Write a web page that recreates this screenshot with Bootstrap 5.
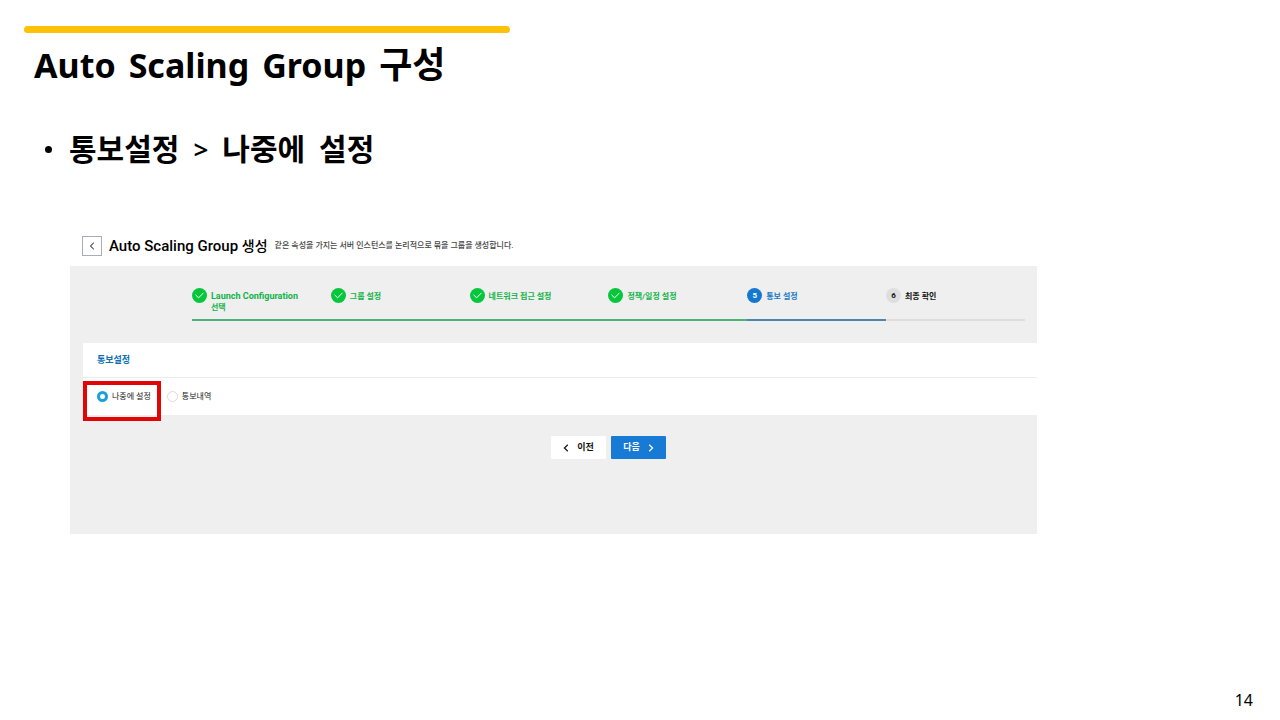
<!DOCTYPE html>
<html lang="ko">
<head>
<meta charset="utf-8">
<meta name="viewport" content="width=device-width, initial-scale=1">
<title>Auto Scaling Group 구성</title>
<link href="https://cdn.jsdelivr.net/npm/bootstrap@5.3.0/dist/css/bootstrap.min.css" rel="stylesheet">
<style>
body{font-family:"Noto Sans","Noto Sans CJK KR",sans-serif;color:#000}
.slide{padding-top:26px}
.accent{width:38%;height:7px;margin-left:24px;background:#fdc107}
.slide-title{font-size:34px;line-height:48px;margin:8px 0 0 34px;column-gap:13px}
.slide-title .hangul{font-size:36px}
.slide-list{list-style:none;margin:38px 0 0 45px;font-size:30px;line-height:44px}
.slide-list li{column-gap:14px}
.slide-list .arrow{font-size:26px;font-weight:600}
.dot{width:7px;height:7px;margin-right:3px;background:#000}
.console{font-family:Roboto,"Noto Sans CJK KR",sans-serif;margin:65px 19% 0 70px;font-size:9px;line-height:11px}
.console-head{height:30px;padding-left:12px;column-gap:7px}
.back{width:20px;height:20px;border:1px solid #a9abb8;background:#fff}
.console-title{font-size:15px;line-height:20px;font-weight:500}
.console-title .hangul{font-size:14px}
.console-desc{font-size:8px;line-height:20px;font-weight:500;color:#444}
.panel{background:#efefef;padding-bottom:75px}
.steps,.actions{padding:0 12px 0 122px}
.steps{list-style:none;padding-top:22px}
.step{flex:1 1 0;height:33px;border-bottom:2px solid #dedede;color:#111;font-size:8px}
.step.done{color:#12b348;border-color:#4fb078}
.step.now{color:#1a7ac4;border-color:#4a86ae}
.step-name{font-size:9px}
.num{width:15px;height:15px;border-radius:50%;background:#dedede;flex:none}
.done .num{background:#06c73c;color:#fff}
.now .num{background:#1478d0;color:#fff}
.step-label{padding-top:3px}
.section-box{background:#fff;margin:22px 0 0 13px}
.section-title{font-size:9px;line-height:34px;padding-left:14px;color:#0e6fb5;border-bottom:1px solid #ebebeb}
.section-body{height:37px;padding-left:14px;font-size:8px;color:#222}
.section-body .form-check-input{width:11px;height:11px;margin:0 4px 0 0;border:1px solid #ddd;background:#fff}
.section-body .form-check-input:checked{border:3px solid #1d9fdb;background:#fff}
.section-body .choice+.choice{margin-left:16px}
.marker{left:0;top:3px;width:78px;height:40px;border:4px solid #e10505}
.actions{margin-top:21px;column-gap:5px}
.nav-btn{width:55px;height:23px;font-size:9px;line-height:11px;border-radius:1px;padding:0}
.nav-prev,.nav-prev:hover{background:#fff;color:#111}
.nav-next,.nav-next:hover{background:#177bd6;color:#fff}
.page-no{font-size:16px;line-height:20px;padding:0 27px 10px 0}
svg{fill:none;stroke:currentColor;display:block}
</style>
</head>
<body class="bg-white">
<div class="slide min-vh-100 d-flex flex-column">
<div class="accent rounded-1"></div>
<h1 class="slide-title fw-bold d-flex align-items-baseline mb-0"><span>Auto</span> <span>Scaling</span> <span>Group</span> <span class="hangul">구성</span></h1>
<ul class="slide-list p-0 mb-0 fw-bold"><li class="d-flex align-items-center"><span class="dot rounded-circle"></span><span>통보설정</span> <span class="arrow">&gt;</span> <span>나중에</span> <span>설정</span></li></ul>

<main class="console">
  <header class="console-head d-flex align-items-start">
    <button class="back p-0 d-flex align-items-center justify-content-center" type="button" aria-label="뒤로"><svg width="6" height="8" viewBox="0 0 6 8"><path d="M4.8.8 1.4 4l3.4 3.2"/></svg></button>
    <h2 class="console-title mb-0">Auto Scaling Group <span class="hangul">생성</span></h2>
    <p class="console-desc mb-0">같은 속성을 가지는 서버 인스턴스를 논리적으로 묶을 그룹을 생성합니다.</p>
  </header>
  <div class="panel">
    <ol class="steps d-flex mb-0 fw-bold">
      <li class="step done d-flex gap-1"><span class="num d-flex align-items-center justify-content-center"><svg width="9" height="7" viewBox="0 0 9 7"><path d="m.5 2.8 3.1 3L8.5.8"/></svg></span><span class="step-label"><span class="step-name">Launch Configuration</span><br>선택</span></li>
      <li class="step done d-flex gap-1"><span class="num d-flex align-items-center justify-content-center"><svg width="9" height="7" viewBox="0 0 9 7"><path d="m.5 2.8 3.1 3L8.5.8"/></svg></span><span class="step-label">그룹 설정</span></li>
      <li class="step done d-flex gap-1"><span class="num d-flex align-items-center justify-content-center"><svg width="9" height="7" viewBox="0 0 9 7"><path d="m.5 2.8 3.1 3L8.5.8"/></svg></span><span class="step-label">네트워크 접근 설정</span></li>
      <li class="step done d-flex gap-1"><span class="num d-flex align-items-center justify-content-center"><svg width="9" height="7" viewBox="0 0 9 7"><path d="m.5 2.8 3.1 3L8.5.8"/></svg></span><span class="step-label">정책/일정 설정</span></li>
      <li class="step now d-flex gap-1"><span class="num d-flex align-items-center justify-content-center">5</span><span class="step-label">통보 설정</span></li>
      <li class="step d-flex gap-1"><span class="num d-flex align-items-center justify-content-center">6</span><span class="step-label">최종 확인</span></li>
    </ol>
    <section class="section-box">
      <h3 class="section-title fw-bold mb-0">통보설정</h3>
      <div class="section-body position-relative d-flex align-items-center">
        <div class="choice d-flex align-items-center"><input class="form-check-input" type="radio" name="notify" id="later" checked><label for="later">나중에 설정</label></div>
        <div class="choice d-flex align-items-center"><input class="form-check-input" type="radio" name="notify" id="history"><label for="history">통보내역</label></div>
        <div class="marker position-absolute pe-none"></div>
      </div>
    </section>
    <div class="actions d-flex justify-content-center">
      <button class="btn nav-btn nav-prev fw-bold border-0 d-flex align-items-center justify-content-center gap-2" type="button"><svg width="6" height="8" viewBox="0 0 6 8"><path stroke-width="1.2" d="M4.8.8 1.4 4l3.4 3.2"/></svg>이전</button>
      <button class="btn nav-btn nav-next fw-bold border-0 d-flex align-items-center justify-content-center gap-2" type="button">다음<svg width="6" height="8" viewBox="0 0 6 8"><path stroke-width="1.2" d="m1.2.8 3.4 3.2-3.4 3.2"/></svg></button>
    </div>
  </div>
</main>
<footer class="mt-auto text-end page-no">14</footer>
</div>
<script src="https://cdn.jsdelivr.net/npm/bootstrap@5.3.0/dist/js/bootstrap.bundle.min.js"></script>
</body>
</html>
